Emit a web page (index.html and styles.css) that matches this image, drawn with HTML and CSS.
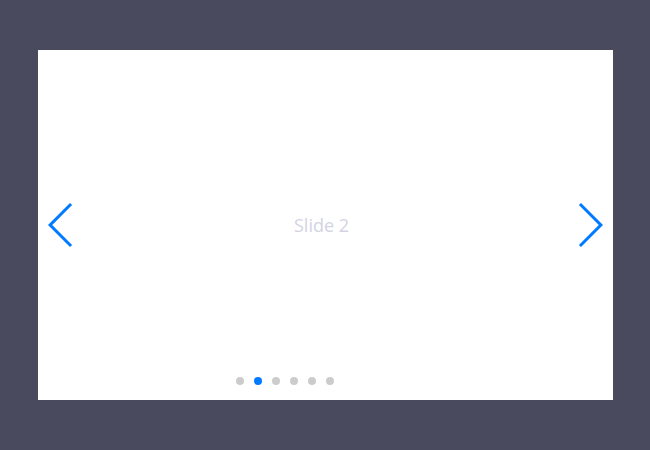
FILE: index.html
```html
<!DOCTYPE html>
<html>
<head>
<meta charset="utf-8">
<link rel="stylesheet" href="styles.css">
</head>
<body>
<div class="swiper">
  <div class="slide">Slide 2</div>
  <button class="nav nav-prev" aria-label="Previous">
    <svg viewBox="0 0 27 44" width="27" height="44"><path d="M0,22L22,0l2.1,2.1L4.2,22l19.9,19.9L22,44L0,22z" fill="#007aff"/></svg>
  </button>
  <button class="nav nav-next" aria-label="Next">
    <svg viewBox="0 0 27 44" width="27" height="44"><path d="M27,22L5,44l-2.1-2.1L22.8,22L2.9,2.1L5,0L27,22z" fill="#007aff"/></svg>
  </button>
  <div class="pagination">
    <span class="bullet"></span>
    <span class="bullet active"></span>
    <span class="bullet"></span>
    <span class="bullet"></span>
    <span class="bullet"></span>
    <span class="bullet"></span>
  </div>
</div>
</body>
</html>
```
FILE: styles.css
```css
html, body {
  margin: 0;
  padding: 0;
}
body {
  background: #4a4a5f;
  width: 650px;
  height: 450px;
  overflow: hidden;
  padding-top: 50px;
  box-sizing: border-box;
}
.swiper {
  position: relative;
  width: 575px;
  height: 350px;
  margin-left: 38px;
  background: #fff;
}
.slide {
  height: 100%;
  display: flex;
  align-items: center;
  justify-content: center;
  padding-right: 8px;
  box-sizing: border-box;
  font-family: "Open Sans", "Noto Sans", sans-serif;
  font-size: 18px;
  color: #d3d3e3;
}
.nav {
  position: absolute;
  top: 50%;
  margin-top: -22px;
  width: 27px;
  height: 44px;
  padding: 0;
  border: 0;
  background: none;
  display: flex;
}
.nav-prev { left: 10px; }
.nav-next { right: 10px; }
.pagination {
  position: absolute;
  left: 198px;
  bottom: 15px;
  display: flex;
  gap: 10px;
}
.bullet {
  width: 8px;
  height: 8px;
  border-radius: 50%;
  background: #cccccc;
}
.bullet.active {
  background: #007aff;
}
```
